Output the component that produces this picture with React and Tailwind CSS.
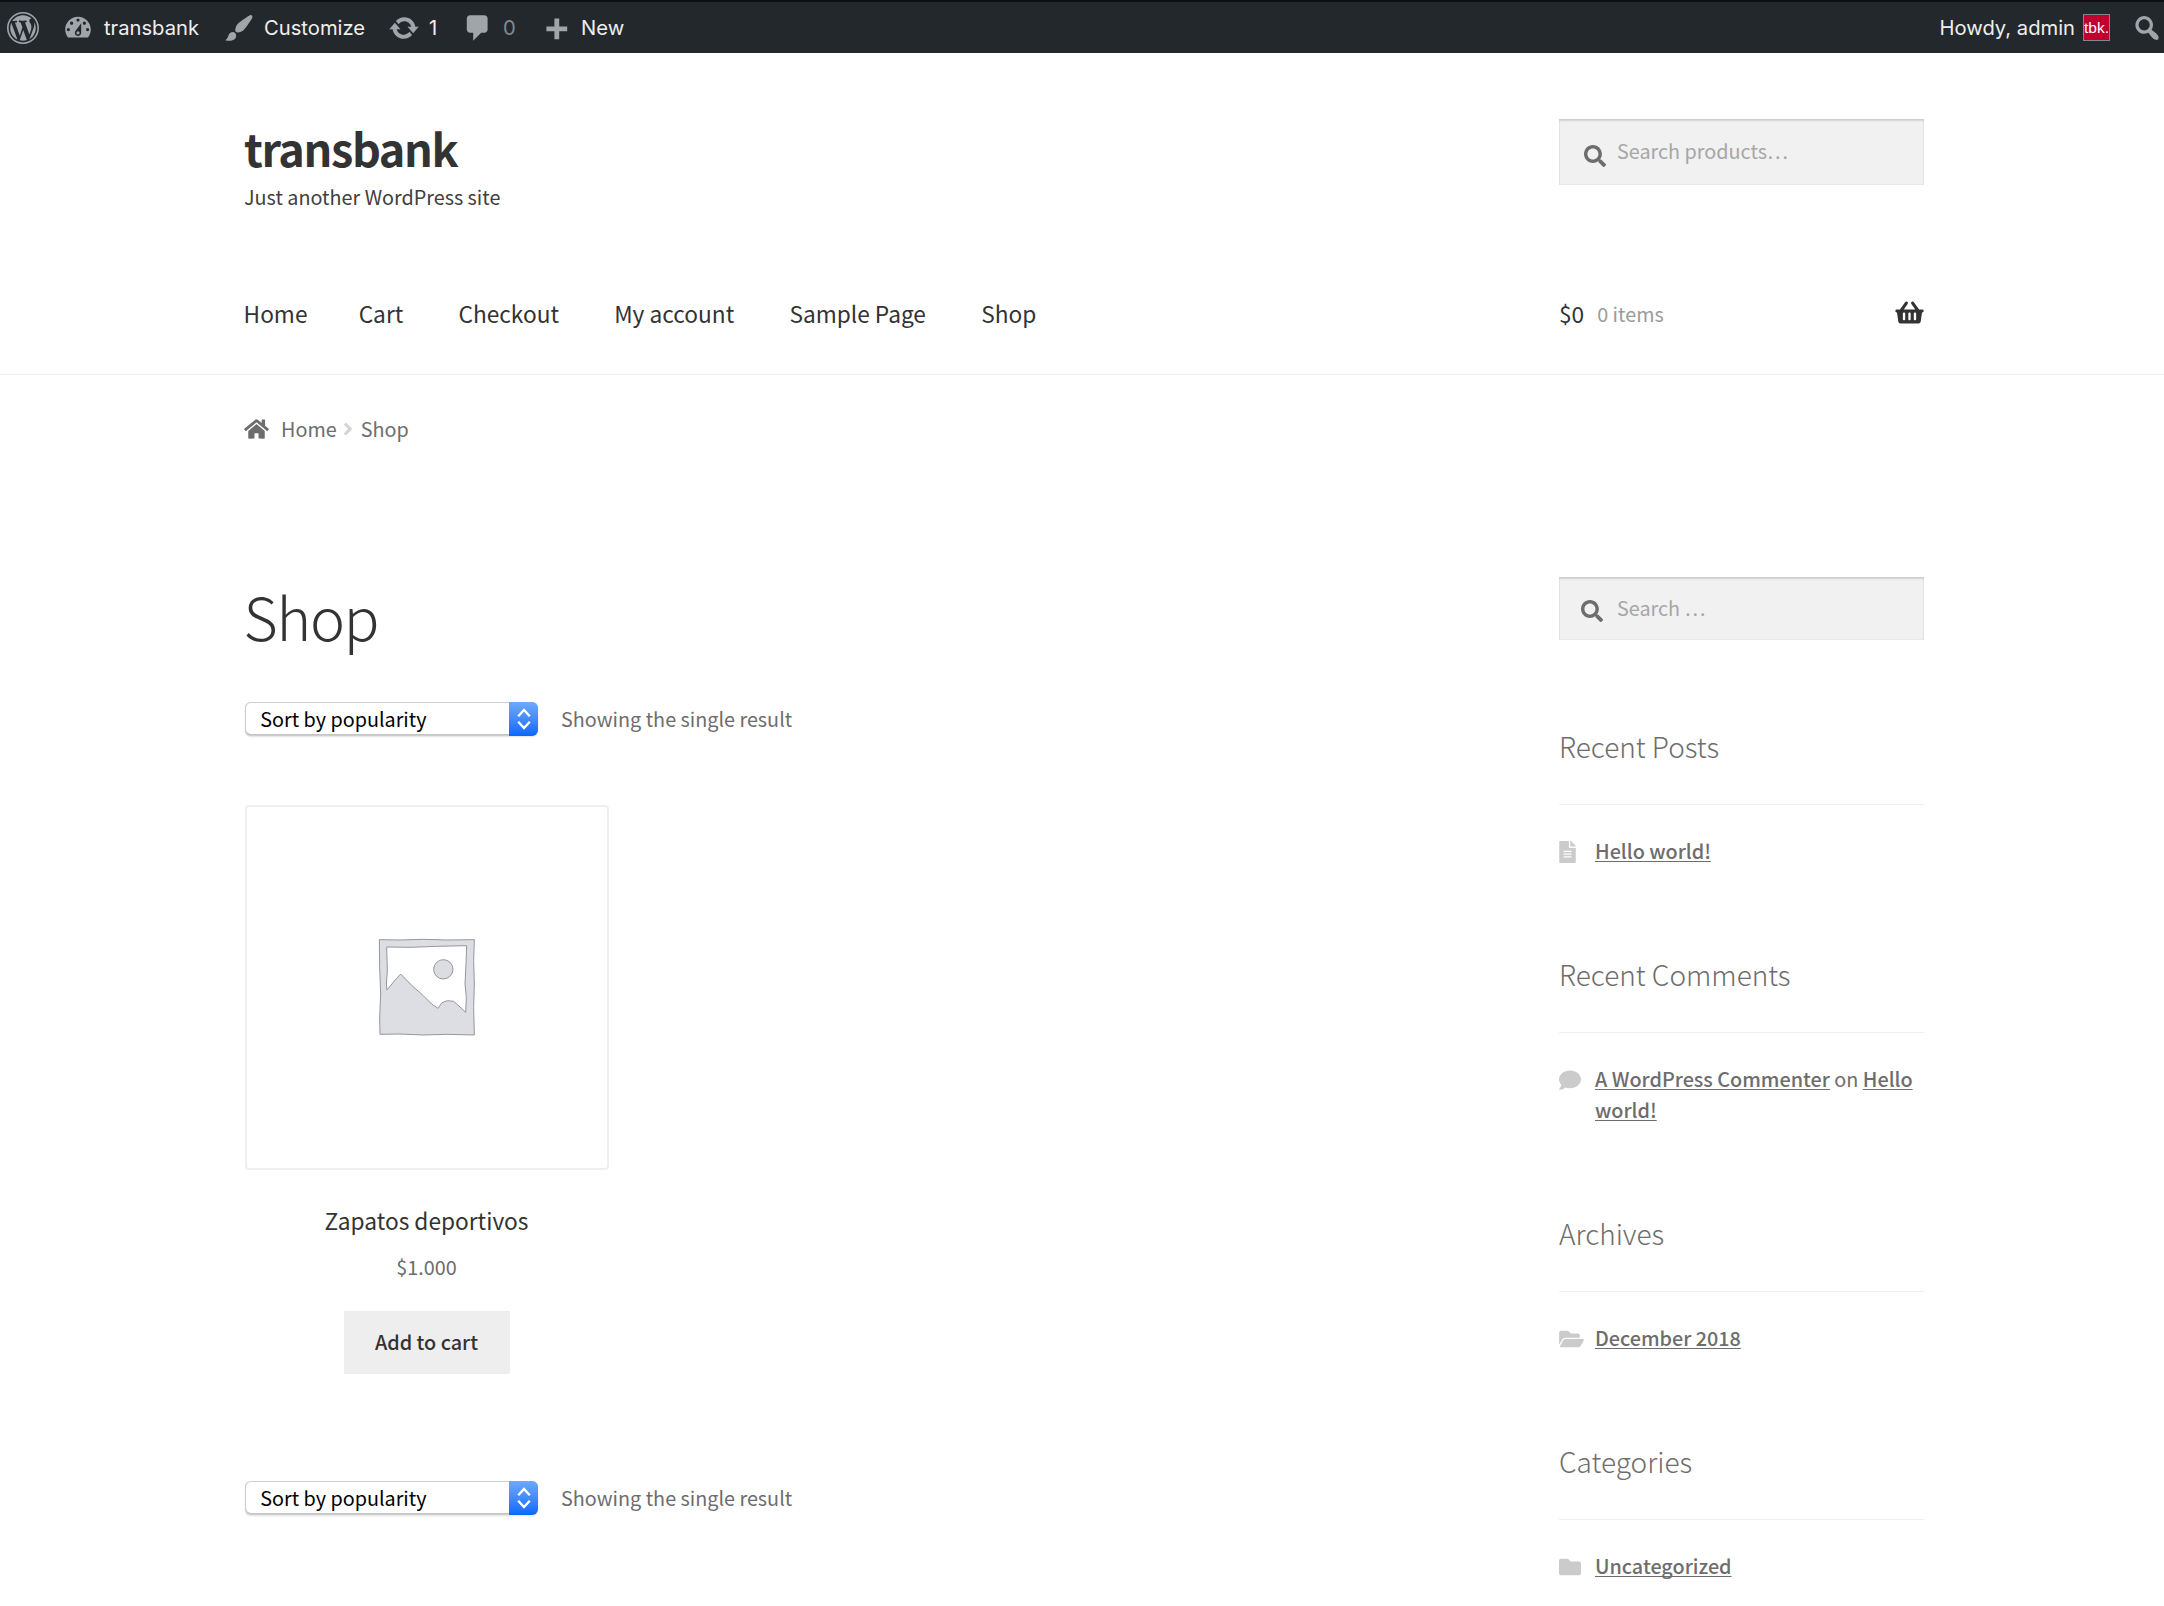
import React from 'react';
import {
  FaSearch,
  FaHome,
  FaShoppingBasket,
  FaFileAlt,
  FaComment,
  FaFolderOpen,
  FaFolder,
  FaAngleRight,
} from 'react-icons/fa';

const DASHICONS = {
  wordpress:
    'M20 10c0-5.52-4.48-10-10-10S0 4.48 0 10s4.48 10 10 10 10-4.48 10-10zM10 1.01c4.97 0 8.99 4.02 8.99 8.99s-4.02 8.99-8.99 8.99S1.01 14.97 1.01 10 5.03 1.01 10 1.01zM8.01 14.82L4.96 6.61c.49-.03 1.05-.08 1.05-.08.43-.05.38-1.01-.06-.99 0 0-1.29.1-2.13.1-.15 0-.33 0-.52-.01 1.44-2.17 3.9-3.6 6.7-3.6 2.09 0 3.99.79 5.41 2.09-.6-.08-1.45.35-1.45 1.42 0 .66.38 1.22.79 1.88.31.54.5 1.22.5 2.21 0 1.34-1.27 4.48-1.27 4.48l-2.71-7.5c.48-.03.75-.16.75-.16.43-.05.38-1.1-.05-1.08 0 0-1.3.11-2.14.11-.78 0-2.11-.11-2.11-.11-.43-.02-.48 1.06-.05 1.08l.84.08 1.12 3.04zM14.03 16.97L16.64 10s.67-1.69.39-3.81c.63 1.14.94 2.42.94 3.81 0 2.96-1.56 5.58-3.94 6.97zM2.68 6.77L6.5 17.25c-2.67-1.3-4.47-4.08-4.47-7.25 0-1.16.2-2.23.65-3.23zM10.13 11.3l2.29 6.25c-.75.27-1.57.42-2.42.42-.72 0-1.41-.11-2.06-.3z',
  dashboard:
    'M3.76 16h12.48c1.1-1.37 1.76-3.11 1.76-5 0-4.42-3.58-8-8-8s-8 3.58-8 8c0 1.89.66 3.63 1.76 5zM10 4c.55 0 1 .45 1 1s-.45 1-1 1-1-.45-1-1 .45-1 1-1zM6 6c.55 0 1 .45 1 1s-.45 1-1 1-1-.45-1-1 .45-1 1-1zM14 6c.55 0 1 .45 1 1s-.45 1-1 1-1-.45-1-1 .45-1 1-1zM8.63 11.55L12 7v6c0 1.1-.9 2-2 2s-2-.9-2-2c0-.57.24-1.08.63-1.45zM4 10c.55 0 1 .45 1 1s-.45 1-1 1-1-.45-1-1 .45-1 1-1zM16 10c.55 0 1 .45 1 1s-.45 1-1 1-1-.45-1-1 .45-1 1-1zM11 13c0-.55-.45-1-1-1s-1 .45-1 1 .45 1 1 1 1-.45 1-1z',
  brush:
    'M18.33 3.57s.27-.8-.31-1.36c-.53-.52-1.22-.24-1.22-.24-.61.3-5.76 3.47-7.67 5.57-.86.96-2.06 3.79-1.09 4.82.92.98 3.96-.17 4.79-1 2.06-2.06 5.21-7.17 5.5-7.79zM1.4 17.65c2.37-1.56 1.46-3.41 3.23-4.64.93-.65 2.22-.62 3.08.29.63.67.8 2.57-.16 3.46-1.57 1.45-4 1.55-6.15.89z',
  update:
    'M10.2 3.28c3.53 0 6.43 2.61 6.92 6h2.08l-3.5 4-3.5-4h2.32c-.45-1.97-2.21-3.45-4.32-3.45-1.45 0-2.73.71-3.54 1.78L4.95 5.66C6.23 4.2 8.11 3.28 10.2 3.28zM9.8 16.72c-3.52 0-6.43-2.61-6.92-6H.8l3.5-4c1.17 1.33 2.33 2.67 3.5 4H5.48c.45 1.97 2.21 3.45 4.32 3.45 1.45 0 2.73-.71 3.54-1.78l1.71 1.95c-1.28 1.46-3.15 2.38-5.25 2.38z',
  comment: 'M5 2h9c1.1 0 2 .9 2 2v7c0 1.1-.9 2-2 2h-2l-5 5v-5H5c-1.1 0-2-.9-2-2V4c0-1.1.9-2 2-2z',
  plus: 'M17 9v3h-5v5H9v-5H4V9h5V4h3v5h5z',
  search:
    'M12.14 4.18c1.87 1.87 2.11 4.75.72 6.89.12.1.22.21.36.31.2.16.47.36.81.59.34.24.56.39.66.47.42.31.73.57.94.78.32.32.6.65.84 1 .25.35.44.69.59 1.04.14.35.21.68.18 1-.02.32-.14.59-.36.81s-.49.34-.81.36c-.31.02-.65-.04-.99-.19-.35-.14-.7-.34-1.04-.59-.35-.24-.68-.52-1-.84-.21-.21-.47-.52-.77-.93-.1-.13-.25-.35-.47-.66-.22-.32-.4-.57-.56-.78-.16-.2-.29-.35-.44-.5-2.07 1.09-4.69.76-6.44-.98-2.14-2.15-2.14-5.64 0-7.78 2.15-2.15 5.63-2.15 7.78 0zM10.73 10.54c1.36-1.37 1.36-3.58 0-4.95-1.37-1.37-3.59-1.37-4.95 0-1.37 1.37-1.37 3.58 0 4.95 1.36 1.37 3.58 1.37 4.95 0z',
};

function Dashicon({ name }) {
  return (
    <svg viewBox="0 0 20 20" className="size-8 shrink-0 fill-[#a0a5aa]">
      <path fillRule="evenodd" d={DASHICONS[name]} />
    </svg>
  );
}

function AdminBar() {
  return (
    <div className="flex h-[53px] items-center whitespace-nowrap border-t-2 border-[#0d0f12] bg-[#23282d] pl-[7px] pr-px font-['Inter',sans-serif] text-[20.2px] leading-[51px] text-[#eee]">
      <Dashicon name="wordpress" />
      <div className="ml-[23px] flex items-center gap-[10px]">
        <Dashicon name="dashboard" />
        <span>transbank</span>
      </div>
      <div className="ml-6 flex items-center gap-2">
        <Dashicon name="brush" />
        <span className="ml-px">Customize</span>
      </div>
      <div className="ml-[23px] flex items-center gap-[9px]">
        <Dashicon name="update" />
        <span className="w-[13px]">1</span>
      </div>
      <div className="ml-5 flex items-center gap-[9px]">
        <Dashicon name="comment" />
        <span className="w-[13px] text-[#85898d]">0</span>
      </div>
      <div className="ml-6 flex items-center gap-[9px]">
        <Dashicon name="plus" />
        <span>New</span>
      </div>
      <div className="ml-auto flex items-center gap-2">
        <span>Howdy, admin</span>
        <span className="flex size-[27px] items-center justify-center border border-[#82878c] bg-[#c0002f] font-['Liberation_Sans',sans-serif] text-[15.5px] leading-none text-white">
          tbk.
        </span>
      </div>
      <div className="ml-[21px]">
        <Dashicon name="search" />
      </div>
    </div>
  );
}

function SearchBox({ placeholder, className, iconClass }) {
  return (
    <div
      className={`flex w-[365px] items-center bg-[#f1f1f1] shadow-[inset_0_2px_2px_rgba(0,0,0,0.13),inset_0_0_1px_1px_rgba(0,0,0,0.03)] ${className}`}
    >
      <FaSearch className={`size-[22px] shrink-0 text-[#6d6d6d] ${iconClass}`} />
      <span className="-mt-px pb-px text-[#a6a6a6]">{placeholder}</span>
    </div>
  );
}

const NAV = ['Cart', 'Checkout', 'My account', 'Sample Page', 'Shop'];

function Header() {
  return (
    <header className="h-[322px] border-b border-[#f0f0f0] pl-[244px] pr-[240px]">
      <div className="flex justify-between">
        <div className="pt-[70px]">
          <h1 className="text-[45px] font-bold leading-[50px] tracking-[-1.4px] text-[#333]">transbank</h1>
          <p className="mt-[9px] leading-[30px] text-[#404040]">Just another WordPress site</p>
        </div>
        <SearchBox
          placeholder="Search products…"
          className="mt-[66px] h-[66px]"
          iconClass="ml-[25px] mr-[11px] mt-[7px]"
        />
      </div>
      <div className="mt-[85px] flex justify-between leading-[34px]">
        <nav className="-ml-[0.4px] flex gap-[55.2px] text-[22.7px] text-[#333]">
          <span className="-mr-1">Home</span>
          {NAV.map((item) => (
            <span key={item}>{item}</span>
          ))}
        </nav>
        <div className="flex w-[365px] items-center">
          <span className="text-[22.7px] text-[#333]">$0</span>
          <span className="ml-[13px] text-[#9b9b9b]">0 items</span>
          <FaShoppingBasket className="mb-[4px] ml-auto h-[25px] w-[29px] text-[#333]" />
        </div>
      </div>
    </header>
  );
}

function Sorting() {
  return (
    <div className="flex items-center gap-[23px] leading-[34px]">
      <div className="flex h-[34px] w-[293.5px] overflow-hidden rounded-[6px] bg-white shadow-[inset_0_0_0_1px_#cfcfcf,inset_0_-1px_0_1px_#c4c4c4,0_1px_2px_rgba(0,0,0,0.12)]">
        <span className="flex-1 pl-[15.7px] text-black">Sort by popularity</span>
        <span className="flex w-[29px] items-center justify-center bg-linear-to-b from-[#6fa9fb] to-[#0667fd]">
          <svg viewBox="0 0 14 22" className="h-[22px] w-[14px] fill-none stroke-white stroke-[2.4]">
            <path d="M1.2 8.2 7 2l5.8 6.2M1.2 13.8 7 20l5.8-6.2" />
          </svg>
        </span>
      </div>
      <span>Showing the single result</span>
    </div>
  );
}

function PlaceholderImage() {
  return (
    <svg viewBox="-9 -11 420 420" className="size-[140px]" strokeLinejoin="round">
      <path
        fill="#dddee3"
        stroke="#96979b"
        strokeWidth="3"
        d="M58 57 120 58 190 56 260 58 343 57 341 120 343 190 341 260 343 343 260 341 190 343 120 340 60 341 59 290 62 220 59 140Z"
      />
      <path
        fill="#fff"
        stroke="#96979b"
        strokeWidth="3"
        d="M80 79 150 80 230 77 320 75 318 130 315 190 319 230 317 275 300 259 281 242 262 240 246 246 234 263 215 250 190 225 155 194 122 160 103 181 81 208 79 190 82 150Z"
      />
      <circle cx="250" cy="146" r="29" fill="#dcdde2" stroke="#96979b" strokeWidth="3" />
    </svg>
  );
}

function ProductCard() {
  return (
    <div className="flex w-[364px] flex-col items-center">
      <div className="flex h-[365px] w-full items-center justify-center rounded-[4px] border-2 border-[#efefef] bg-white">
        <PlaceholderImage />
      </div>
      <h2 className="mt-[36px] text-[22.7px] leading-[30px] text-[#333]">Zapatos deportivos</h2>
      <span className="mt-4 leading-[30px]">$1.000</span>
      <button className="mt-[29px] h-[63px] w-[166px] bg-[#eee] font-medium leading-[62px] text-[#333]">
        Add to cart
      </button>
    </div>
  );
}

function Link({ children }) {
  return (
    <a className="font-medium underline decoration-1 underline-offset-2 [text-decoration-skip-ink:none]">
      {children}
    </a>
  );
}

function Widget({ title, icon, children }) {
  return (
    <section className="mb-[87.1px]">
      <h3 className="border-b border-[#f0f0f0] pb-[38px] text-[28px] font-light leading-[40px]">{title}</h3>
      <div className="mt-[30px] flex leading-[31.4px]">
        <div className="flex h-[31px] w-9 shrink-0 items-center pt-[3px] text-[#cbcbcb]">{icon}</div>
        <div>{children}</div>
      </div>
    </section>
  );
}

export default function App() {
  return (
    <div className="h-[1606px] w-[2164px] overflow-hidden bg-white font-['Noto_Sans_CJK_SC','Noto_Sans',sans-serif] text-[19.8px] text-[#6d6d6d]">
      <AdminBar />
      <Header />
      <div className="mt-[39px] flex h-[30px] items-center pl-[244px] leading-[30px]">
        <FaHome className="mb-px h-[22px] w-[25px]" />
        <span className="ml-3">Home</span>
        <FaAngleRight className="ml-px mr-[3px] size-[20px] text-[#d6d6d6]" />
        <span>Shop</span>
      </div>
      <div className="mt-[133px] flex justify-between pl-[244.5px] pr-[240px]">
        <main>
          <h1 className="-ml-px mt-[4px] text-[59px] font-light leading-[70px] tracking-[-1.2px] text-[#333]">Shop</h1>
          <div className="mt-[50.5px]">
            <Sorting />
          </div>
          <div className="mb-[107px] mt-[69px]">
            <ProductCard />
          </div>
          <Sorting />
        </main>
        <aside className="w-[365px]">
          <SearchBox
            placeholder="Search …"
            className="mb-[86px] h-[63px]"
            iconClass="ml-[22px] mr-[14px] mt-[4px]"
          />
          <Widget title="Recent Posts" icon={<FaFileAlt className="h-[22px] w-[17px]" />}>
            <Link>Hello world!</Link>
          </Widget>
          <Widget title="Recent Comments" icon={<FaComment className="size-[22px]" />}>
            <div>
              <Link>A WordPress Commenter</Link> on <Link>Hello</Link>
            </div>
            <div className="pb-[0.6px]">
              <Link>world!</Link>
            </div>
          </Widget>
          <Widget title="Archives" icon={<FaFolderOpen className="h-[22px] w-[25px]" />}>
            <Link>December 2018</Link>
          </Widget>
          <Widget title="Categories" icon={<FaFolder className="size-[22px]" />}>
            <Link>Uncategorized</Link>
          </Widget>
        </aside>
      </div>
    </div>
  );
}
